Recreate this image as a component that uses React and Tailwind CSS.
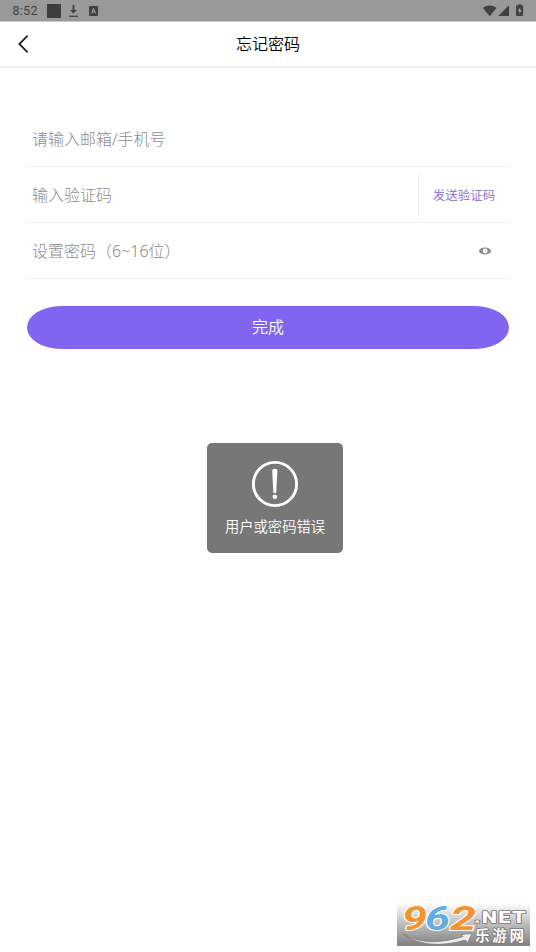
import React, { useState } from "react";

function StatusBar() {
  return (
    <div className="flex h-[22px] items-center justify-between border-b border-[#c8c8c8] bg-[#999999] pl-[12.5px] pr-[12px] text-[#404040]">
      <div className="flex items-center">
        <span className="w-[34.5px] pt-px font-['Roboto',sans-serif] text-[12.3px] leading-[20px] tracking-[0.4px]">
          8:52
        </span>
        <span className="h-[14px] w-[14px] bg-[#3e3e3e]" />
        <svg className="ml-[7px]" width="11" height="14" viewBox="0 0 11 14">
          <path d="M4.6 1h1.8v5h2.4L5.5 9.5 2.2 6h2.4z" fill="#404040" />
          <path d="M1 12.3h9" stroke="#404040" strokeWidth="1.2" />
        </svg>
        <svg className="ml-[10px]" width="9" height="10" viewBox="0 0 9 10">
          <rect width="9" height="10" rx="1.2" fill="#404040" />
          <path
            d="M2.4 7.5 4.5 2.5l2.1 5M3.2 6h2.6"
            fill="none"
            stroke="#b0b0b0"
            strokeWidth="0.9"
          />
        </svg>
      </div>
      <svg width="42" height="14" viewBox="0 0 42 14">
        <path d="M.8 3.8Q7.7-.8 14.6 3.8L7.7 12.2z" fill="#404040" />
        <path d="M27 1.2V12H16.2z" fill="#404040" />
        <path
          d="M34.8 1.3h1.3V.3h3v1h1.2q.8 0 .8.8v9q0 .8-.8.8h-5.5q-.8 0-.8-.8v-9q0-.8.8-.8z"
          fill="#404040"
        />
        <path d="M38.2 3.2 36 7.2h1.4v2.8l2.3-4h-1.5z" fill="#aaaaaa" />
      </svg>
    </div>
  );
}

function Header() {
  return (
    <div className="grid h-[46px] grid-cols-[60px_1fr_60px] items-center border-b-2 border-[#efeff7]">
      <button className="pl-[17px]">
        <svg width="12" height="20" viewBox="0 0 12 20">
          <path
            d="M10.6 1.7 2.4 10l8.2 8.3"
            fill="none"
            stroke="#222222"
            strokeWidth="1.8"
          />
        </svg>
      </button>
      <h1 className="text-center text-[16px] font-[350] leading-[24px] text-black">
        忘记密码
      </h1>
    </div>
  );
}

function Field({ placeholder, type = "text", children }) {
  const [value, setValue] = useState("");

  return (
    <div className="flex h-[56px] items-center border-b border-[#ededf2] pl-[5px]">
      <input
        className="min-w-0 flex-1 bg-transparent text-[16px] font-light leading-[24px] text-[#555555] outline-none placeholder:text-[#8c8c8c]"
        type={type}
        placeholder={placeholder}
        value={value}
        onChange={(e) => setValue(e.target.value)}
      />
      {children}
    </div>
  );
}

function Toast({ message }) {
  return (
    <div className="absolute left-[207px] top-[443px] flex h-[110px] w-[136px] flex-col items-center rounded-[5px] bg-[#777777] pt-[17px] text-white">
      <svg width="48" height="48" viewBox="0 0 48 48">
        <circle
          cx="24"
          cy="24"
          r="21.6"
          fill="none"
          stroke="white"
          strokeWidth="2.9"
        />
        <path
          d="M21.2 10.5Q21.2 8.7 23.8 8.7T26.4 10.5L25.2 33h-2.8z"
          fill="white"
        />
        <circle cx="23.8" cy="36.8" r="2.3" fill="white" />
      </svg>
      <p className="mt-[8px] text-[14.3px] font-[350] leading-[21px]">
        {message}
      </p>
    </div>
  );
}

function Watermark() {
  return (
    <svg
      className="absolute left-[397px] top-[903px] overflow-visible"
      width="133"
      height="43"
      viewBox="0 0 133 43"
    >
      <defs>
        <linearGradient id="shade" x1="0" y1="0" x2="0" y2="1">
          <stop offset="0" stopColor="#ffffff" />
          <stop offset="0.5" stopColor="#bcbcbc" />
          <stop offset="1" stopColor="#808080" />
        </linearGradient>
      </defs>
      <rect width="133" height="43" fill="url(#shade)" />
      <g
        fontFamily="Roboto, sans-serif"
        fontWeight="700"
        fontStyle="italic"
        fontSize="34"
        stroke="#ffffff"
        strokeWidth="2"
        paintOrder="stroke"
        strokeLinejoin="round"
      >
        <text x="5" y="27" textLength="25" lengthAdjust="spacingAndGlyphs" fill="#f59331">
          9
        </text>
        <text x="28" y="27" textLength="25" lengthAdjust="spacingAndGlyphs" fill="#62aee2">
          6
        </text>
        <text x="53" y="27" textLength="26" lengthAdjust="spacingAndGlyphs" fill="#f59331">
          2
        </text>
      </g>
      <path
        d="M6 31Q30 45 66 33.5L64 31.5 75 30.5 70.5 40 68.5 37Q30 48 6 31z"
        fill="#eeeeee"
        stroke="#777777"
        strokeWidth="0.7"
      />
      <g
        fill="#ffffff"
        stroke="#777777"
        strokeWidth="1.6"
        paintOrder="stroke"
        strokeLinejoin="round"
      >
        <text
          x="77"
          y="20"
          fontSize="17"
          fontWeight="900"
          fontFamily="Roboto, sans-serif"
          textLength="53"
          lengthAdjust="spacingAndGlyphs"
          letterSpacing="1"
        >
          .NET
        </text>
        <text
          x="78"
          y="38"
          fontSize="14.5"
          fontWeight="700"
          fontFamily="Noto Sans CJK SC, sans-serif"
          textLength="49"
        >
          乐游网
        </text>
      </g>
    </svg>
  );
}

export default function App() {
  return (
    <div className="relative h-[952px] w-[536px] overflow-hidden bg-white font-['Noto_Sans','Noto_Sans_CJK_SC',sans-serif]">
      <StatusBar />
      <Header />
      <div className="ml-[27px] mr-[27px] mt-[43px]">
        <Field placeholder="请输入邮箱/手机号" />
        <Field placeholder="输入验证码">
          <button className="h-[44px] w-[91px] border-l border-[#e8e8f2] pt-[3px] text-[12.5px] font-[350] text-[#8467d6]">
            发送验证码
          </button>
        </Field>
        <Field placeholder="设置密码（6~16位）" type="password">
          <button className="mr-[18px]">
            <svg width="12" height="8" viewBox="0 0 12 8">
              <ellipse cx="6" cy="4" rx="6" ry="3.6" fill="#8c8c8c" />
              <circle cx="6.2" cy="4" r="2.4" fill="white" />
              <circle cx="6.2" cy="4" r="0.7" fill="#cccccc" />
            </svg>
          </button>
        </Field>
        <button className="mt-[27px] h-[43px] w-full rounded-[34px/21.5px] bg-[#8165f0] pb-[2px] text-[16px] font-[350] text-white">
          完成
        </button>
      </div>
      <Toast message="用户或密码错误" />
      <Watermark />
    </div>
  );
}
